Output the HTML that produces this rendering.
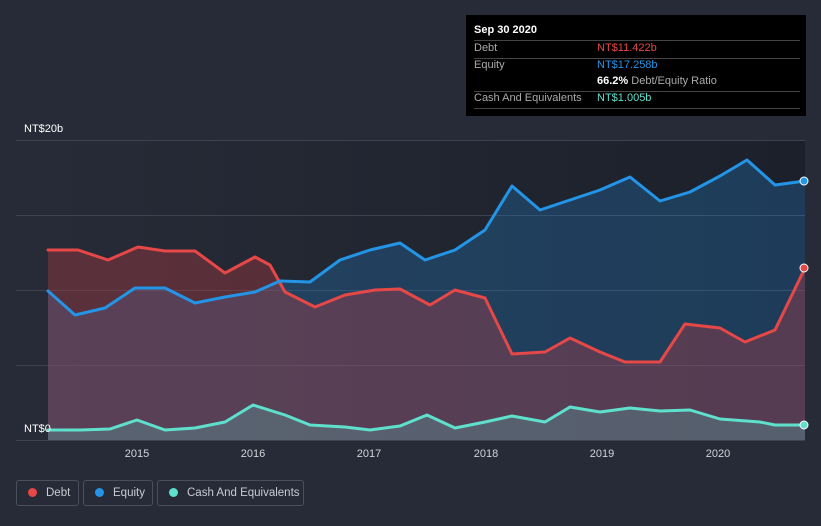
<!DOCTYPE html><html><head><style>
html,body{margin:0;width:821px;height:526px}
body{background:#262b37;font-family:"Liberation Sans",sans-serif;overflow:hidden;position:relative}
.t{position:absolute;left:466px;top:15px;width:340px;height:101px;background:#000;color:#fff;font-size:11px}
.r{position:absolute;left:8px;width:326px;border-top:1px solid #444}
.lg{position:absolute;top:480px;height:26px;border:1px solid #4a4f5c;border-radius:3px;color:#c8cbd2;font-size:11.5px;line-height:24px;box-sizing:border-box;white-space:nowrap}
.lg i{display:inline-block;width:9px;height:9px;border-radius:50%;margin:0 9px 0 11px;vertical-align:-1px}
</style></head><body>
<svg width="821" height="526" style="position:absolute;left:0;top:0">
<defs><linearGradient id="bg" x1="0" x2="1"><stop offset="0" stop-color="#262b37"/><stop offset="1" stop-color="#1c202a"/></linearGradient></defs>
<rect x="48" y="140" width="757" height="300" fill="url(#bg)"/>
<g stroke="#3d424e" stroke-width="1"><line x1="16" x2="805" y1="140.5" y2="140.5"/><line x1="16" x2="805" y1="215.5" y2="215.5"/><line x1="16" x2="805" y1="290.5" y2="290.5"/><line x1="16" x2="805" y1="365.5" y2="365.5"/><line x1="16" x2="805" y1="440.5" y2="440.5"/></g>
<polygon fill="rgba(35,120,190,0.32)" points="48,440 48,291 75,315 105,308 135,288 165,288 195,303 225,297 255,292 280,281 310,282 340,260 370,250 400,243 425,260 455,250 485,230 512,186 540,210 570,200 600,190 630,177 660,201 690,192 720,176 747,160 775,185 805,181 805,440"/>
<polygon fill="rgba(190,60,70,0.35)" points="48,440 48,250 78,250 108,260 138,247 165,251 195,251 225,273 255,257 270,265 285,292 315,307 345,295 375,290 400,289 430,305 455,290 485,298 512,354 545,352 570,338 600,352 625,362 660,362 685,324 720,328 745,342 775,330 805,268 805,440"/>
<polygon fill="rgba(90,200,190,0.25)" points="48,440 48,430 80,430 110,429 137,420 165,430 195,428 225,422 253,405 285,415 310,425 345,427 370,430 400,426 427,415 455,428 485,422 512,416 545,422 570,407 600,412 630,408 660,411 690,410 720,419 760,422 775,425 805,425 805,440"/>
<g fill="none" stroke-width="3" stroke-linejoin="round" stroke-linecap="round">
<polyline stroke="#e64747" points="48,250 78,250 108,260 138,247 165,251 195,251 225,273 255,257 270,265 285,292 315,307 345,295 375,290 400,289 430,305 455,290 485,298 512,354 545,352 570,338 600,352 625,362 660,362 685,324 720,328 745,342 775,330 805,268"/>
<polyline stroke="#2394e6" points="48,291 75,315 105,308 135,288 165,288 195,303 225,297 255,292 280,281 310,282 340,260 370,250 400,243 425,260 455,250 485,230 512,186 540,210 570,200 600,190 630,177 660,201 690,192 720,176 747,160 775,185 805,181"/>
<polyline stroke="#5fe0cc" points="48,430 80,430 110,429 137,420 165,430 195,428 225,422 253,405 285,415 310,425 345,427 370,430 400,426 427,415 455,428 485,422 512,416 545,422 570,407 600,412 630,408 660,411 690,410 720,419 760,422 775,425 805,425"/>
</g>
<circle cx="804" cy="181" r="4" fill="#2394e6" stroke="#fff" stroke-width="1"/>
<circle cx="804" cy="268" r="4" fill="#e64747" stroke="#fff" stroke-width="1"/>
<circle cx="804" cy="425" r="4" fill="#5fe0cc" stroke="#fff" stroke-width="1"/>
<g fill="#fff" font-size="11" font-family="Liberation Sans"><text x="24" y="132">NT$20b</text><text x="24" y="432">NT$0</text>
<g fill="#d0d3da" text-anchor="middle"><text x="137" y="457">2015</text><text x="253" y="457">2016</text><text x="369" y="457">2017</text><text x="486" y="457">2018</text><text x="602" y="457">2019</text><text x="718" y="457">2020</text></g></g>
</svg>
<div class="t">
<div style="position:absolute;left:8px;top:9px;font-weight:bold">Sep 30 2020</div>
<div class="r" style="top:25px"></div>
<div style="position:absolute;left:8px;top:27px;color:#aaa">Debt</div><div style="position:absolute;left:131px;top:27px;color:#e64747">NT$11.422b</div>
<div class="r" style="top:43px"></div>
<div style="position:absolute;left:8px;top:44px;color:#aaa">Equity</div><div style="position:absolute;left:131px;top:44px;color:#2394e6">NT$17.258b</div>
<div style="position:absolute;left:131px;top:60px"><b>66.2%</b> <span style="color:#aaa">Debt/Equity Ratio</span></div>
<div class="r" style="top:76px"></div>
<div style="position:absolute;left:8px;top:77px;color:#aaa">Cash And Equivalents</div><div style="position:absolute;left:131px;top:77px;color:#5fe0cc">NT$1.005b</div>
<div class="r" style="top:93px"></div>
</div>
<div class="lg" style="left:16px;width:63px"><i style="background:#e64747"></i>Debt</div>
<div class="lg" style="left:83px;width:70px"><i style="background:#2394e6"></i>Equity</div>
<div class="lg" style="left:157px;width:147px"><i style="background:#5fe0cc"></i>Cash And Equivalents</div>
</body></html>
